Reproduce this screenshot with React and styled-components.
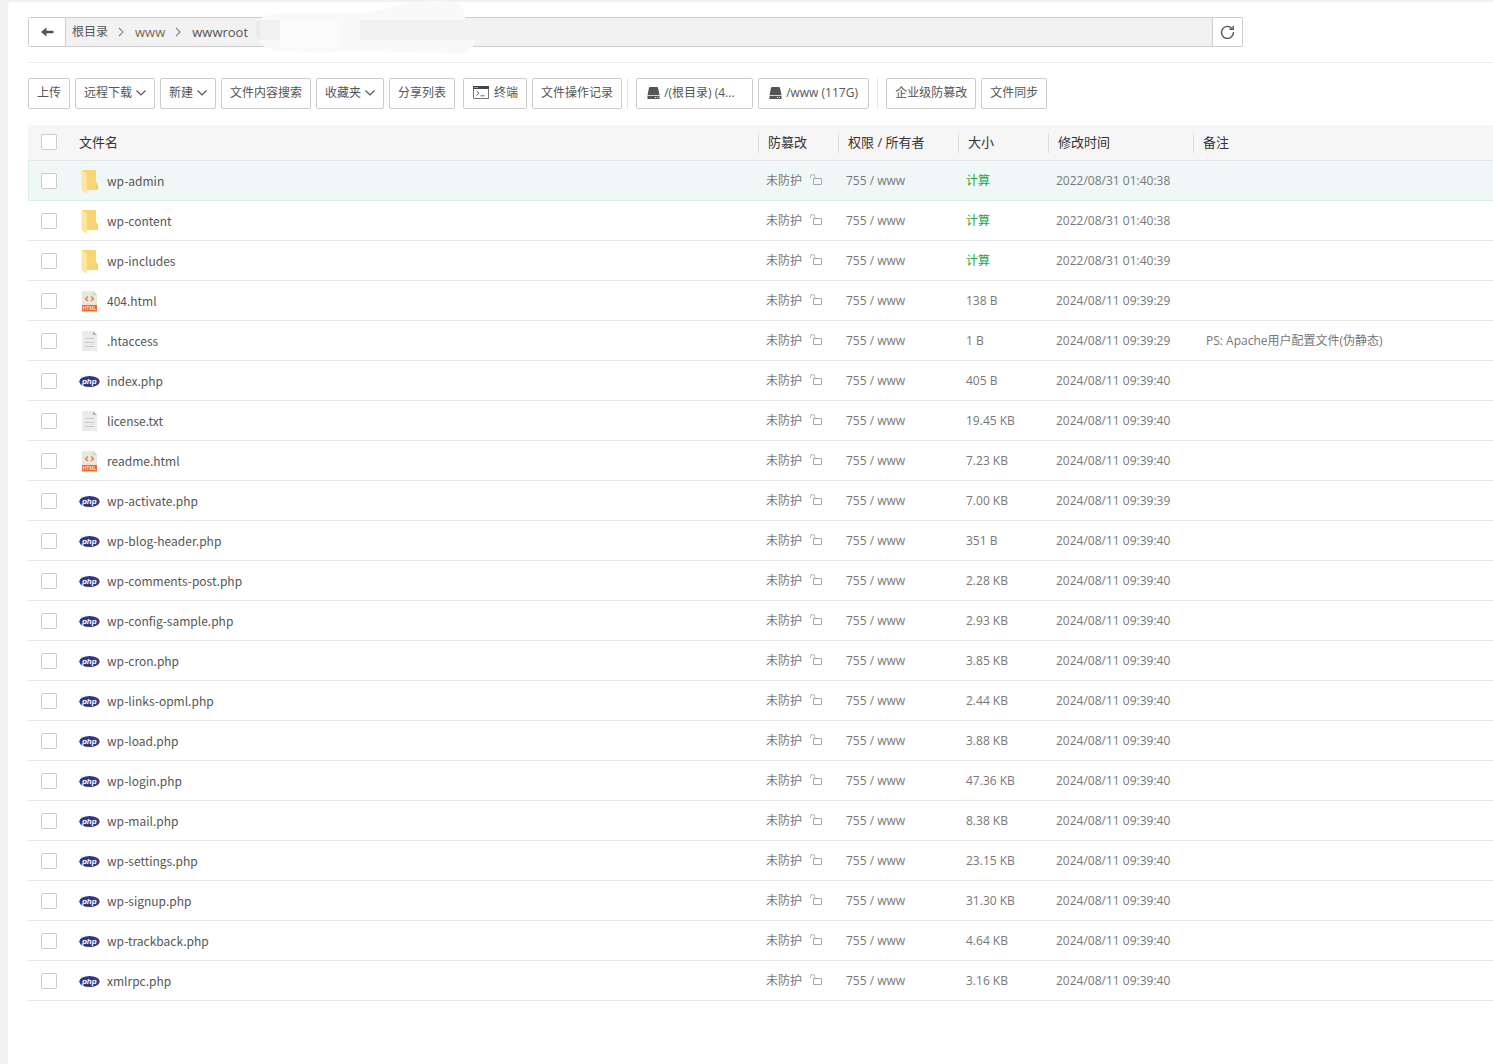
import React from "react";
import styled, { createGlobalStyle, css } from "styled-components";

const GlobalStyle = createGlobalStyle`
  * { box-sizing: border-box; }
  body {
    margin: 0;
    background: #f1f1f1;
    font-family: "Open Sans", "Noto Sans CJK SC", sans-serif;
    font-size: 12px;
    color: #555;
  }
  button, input { font: inherit; color: inherit; }
`;

const Panel = styled.main`
  margin: 2px 0 0 8px;
  padding: 15px 0 0 20px;
  min-height: calc(100vh - 2px);
  background: #fff;
  border-top-left-radius: 4px;
`;

const PathRow = styled.nav`
  position: relative;
  display: flex;
  height: 30px;
  width: 83%;
  max-width: 1215px;
  border: 1px solid #ccc;
  border-radius: 2px;
  background: #f2f2f2;
`;

const PathButton = styled.button`
  display: flex;
  align-items: center;
  justify-content: center;
  flex: none;
  width: ${(p) => (p.$end ? 30 : 37)}px;
  padding: 0;
  border: 0 solid #ccc;
  border-width: ${(p) => (p.$end ? "0 0 0 1px" : "0 1px 0 0")};
  background: #fff;
  cursor: pointer;
`;

const Crumbs = styled.ol`
  display: flex;
  align-items: center;
  flex: 1;
  gap: 11px;
  margin: 0;
  padding: 0 6px;
  list-style: none;
`;

const Crumb = styled.li`
  display: flex;
  align-items: center;
  gap: 10px;
`;

const CrumbLink = styled.a`
  color: ${(p) => p.$color || "#555"};
  font-size: ${(p) => (p.$latin ? 13 : 12)}px;
  line-height: 20px;
  text-decoration: none;
`;

const Smudge = styled.svg`
  position: absolute;
  left: 224px;
  top: -18px;
  pointer-events: none;
`;

const Toolbar = styled.div`
  display: flex;
  align-items: center;
  gap: 5px;
  margin-top: 15px;
  padding: 15px 0 16px;
  border-top: 1px solid #ebebeb;
`;

const ToolGroup = styled.div`
  display: flex;
  gap: 5px;
  margin-right: ${(p) => (p.$spaced ? 3 : 0)}px;
`;

const Separator = styled.span`
  width: 1px;
  height: 31px;
  margin-right: 3px;
  background: #e6e6e6;
`;

const ToolButton = styled.button`
  display: flex;
  align-items: center;
  gap: 4px;
  height: 31px;
  padding: 0 8px 2px;
  border: 1px solid #ccc;
  border-radius: 2px;
  background: #fff;
  line-height: 20px;
  white-space: nowrap;
  cursor: pointer;
  ${(p) => p.$kind === "terminal" && css`gap: 5px; padding-left: 9px;`}
  ${(p) => p.$kind === "disk" && css`padding-left: 10px;`}
`;

const DiskLabel = styled.span`
  width: ${(p) => p.$width}px;
  overflow: hidden;
  text-align: left;
  text-overflow: ellipsis;
`;

const Table = styled.table`
  width: 100%;
  border-collapse: separate;
  border-spacing: 0;
  table-layout: fixed;
`;

const HeadCell = styled.th`
  height: 36px;
  padding: 0;
  background: #f6f6f6;
  border-bottom: 1px solid #e6e6e6;
  color: #333;
  font-size: 13px;
  font-weight: 400;
  text-align: left;
`;

const HeadLabel = styled.div`
  height: 20px;
  padding-left: ${(p) => (p.$divided ? 9 : 8)}px;
  border-left: ${(p) => (p.$divided ? "1px solid #ddd" : "0")};
  line-height: 19px;
`;

const Row = styled.tr`
  --line: #e6e6e6;
  ${(p) => p.$active && css`
    --line: #d8f0ea;
    background: #eff8f7;
    td:first-child { border-left: 1px solid var(--line); padding-left: 12px; }
  `}
`;

const Cell = styled.td`
  height: 40px;
  padding: 0 8px;
  border-bottom: 1px solid var(--line);
  color: #777;
  line-height: 20px;
  white-space: nowrap;
`;

const NoteCell = styled(Cell)`
  padding-left: 13px;
`;

const CheckCell = styled(Cell)`
  padding: 0 0 0 13px;
`;

const HeadCheckCell = styled(HeadCell)`
  padding: 0 0 2px 13px;
`;

const Check = styled.input`
  display: block;
  appearance: none;
  width: 16px;
  height: 16px;
  margin: 0;
  border: 1px solid #ccc;
  border-radius: 2px;
  background: #fff;
`;

const FileName = styled.div`
  display: flex;
  align-items: center;
  gap: 7px;
  color: #555;
  font-family: "Noto Sans CJK SC", sans-serif;
  svg { margin-top: 2px; }
`;

const Protect = styled.div`
  display: flex;
  align-items: center;
  gap: 8px;
  svg { margin-bottom: 2px; }
`;

const SizeLink = styled.a`
  color: #20a53a;
  text-decoration: none;
`;

const Chevron = () => (
  <svg width="10" height="8" viewBox="0 0 10 8" fill="none" stroke="#555" strokeWidth="1.2">
    <path d="M.5 1.5 5 6l4.500-4.500" />
  </svg>
);

const CrumbArrow = () => (
  <svg width="6" height="10" viewBox="0 0 6 10" fill="none" stroke="#888" strokeWidth="1.1">
    <path d="M1 1l4 4-4 4" />
  </svg>
);

const BackIcon = () => (
  <svg width="13" height="10" viewBox="0 0 13 10" fill="#555">
    <path d="M0 5 5.500 0.500V3.800H12.500V6.200H5.500V9.500Z" />
  </svg>
);

const RefreshIcon = () => (
  <svg width="15" height="15" viewBox="0 0 15 15" fill="none" stroke="#555" strokeWidth="1.4">
    <path d="M12 3.400A6 6 0 1 0 13.500 7" />
    <path d="M13.200 .8v3.400H9.500" />
  </svg>
);

const TerminalIcon = () => (
  <svg width="16" height="13" viewBox="0 0 16 13" fill="none">
    <path d="M.5.5h15v12H.5z" stroke="#777" />
    <path d="M0 0h16v3H0z" fill="#444" />
    <path d="M1.500 1.500h1M3.500 1.500h1" stroke="#fff" />
    <path d="M3.500 5 6 7.200 3.500 9.500M7.500 9.800h4" stroke="#666" />
  </svg>
);

const DiskIcon = () => (
  <svg width="13" height="12" viewBox="0 0 13 12" fill="#555">
    <path d="M3 0h7q.8 0 1 .8L12.500 8H.5L2 .8Q2.200 0 3 0Z" />
    <path fillRule="evenodd" d="M.5 8.700h12V12H.5ZM8 10v1h1v-1Zm2 0v1h1v-1Z" />
  </svg>
);

const LockIcon = () => (
  <svg width="12" height="11" viewBox="0 0 12 11" fill="none" stroke="#aaa">
    <path d="M3.500 4.500h8v6h-8zM.5 4V2.500Q.5.5 2.700.5T4.800 2.500V4" />
  </svg>
);

const FolderIcon = () => (
  <svg width="21" height="24" viewBox="0 0 21 24">
    <path d="M3 0h14v12l2 4v4H4Z" fill="#f7d573" />
    <path d="M17 12l2 4v4l-2-1Z" fill="#f3cc62" />
    <path d="M2.500 0 8 3.500V24l-5.500-4Z" fill="#ffe59e" />
  </svg>
);

const HtmlIcon = () => (
  <svg width="21" height="21" viewBox="0 0 21 21">
    <path d="M3 0h11l4 4v10H3Z" fill="#e8e8dc" />
    <path d="M14 0l4 4h-4Z" fill="#d2d2c5" />
    <path d="M9 5.500 6.500 7.800 9 10M12 5.500l2.500 2.300L12 10" fill="none" stroke="#f0703c" strokeWidth="1.200" />
    <path d="M3 14h15v6.500H3Z" fill="#f26430" />
    <text x="10.500" y="19" textAnchor="middle" fontFamily="Liberation Sans, sans-serif" fontSize="5" fill="#fff">HTML</text>
  </svg>
);

const TextIcon = () => (
  <svg width="21" height="21" viewBox="0 0 21 21">
    <path d="M3 0h11l4 4v16H3Z" fill="#ebebeb" />
    <path d="M14 0l4 4h-4Z" fill="#b5b5b5" />
    <path d="M6 7.500h9M6 11.500h9M6 15.500h9" stroke="#c8c8c8" />
  </svg>
);

const PhpIcon = () => (
  <svg width="21" height="13" viewBox="0 0 21 13">
    <ellipse cx="10.500" cy="6.500" rx="10.200" ry="5.500" fill="#2f3a82" />
    <text x="10.300" y="8.800" textAnchor="middle" fontFamily="Liberation Sans, sans-serif" fontSize="8" fontWeight="700" fontStyle="italic" fill="#fff">php</text>
  </svg>
);

const ICONS = { folder: FolderIcon, html: HtmlIcon, text: TextIcon, php: PhpIcon };

const FILES = [
  ["folder", "wp-admin", null, "2022/08/31 01:40:38"],
  ["folder", "wp-content", null, "2022/08/31 01:40:38"],
  ["folder", "wp-includes", null, "2022/08/31 01:40:39"],
  ["html", "404.html", "138 B", "2024/08/11 09:39:29"],
  ["text", ".htaccess", "1 B", "2024/08/11 09:39:29", "PS: Apache用户配置文件(伪静态)"],
  ["php", "index.php", "405 B", "2024/08/11 09:39:40"],
  ["text", "license.txt", "19.45 KB", "2024/08/11 09:39:40"],
  ["html", "readme.html", "7.23 KB", "2024/08/11 09:39:40"],
  ["php", "wp-activate.php", "7.00 KB", "2024/08/11 09:39:39"],
  ["php", "wp-blog-header.php", "351 B", "2024/08/11 09:39:40"],
  ["php", "wp-comments-post.php", "2.28 KB", "2024/08/11 09:39:40"],
  ["php", "wp-config-sample.php", "2.93 KB", "2024/08/11 09:39:40"],
  ["php", "wp-cron.php", "3.85 KB", "2024/08/11 09:39:40"],
  ["php", "wp-links-opml.php", "2.44 KB", "2024/08/11 09:39:40"],
  ["php", "wp-load.php", "3.88 KB", "2024/08/11 09:39:40"],
  ["php", "wp-login.php", "47.36 KB", "2024/08/11 09:39:40"],
  ["php", "wp-mail.php", "8.38 KB", "2024/08/11 09:39:40"],
  ["php", "wp-settings.php", "23.15 KB", "2024/08/11 09:39:40"],
  ["php", "wp-signup.php", "31.30 KB", "2024/08/11 09:39:40"],
  ["php", "wp-trackback.php", "4.64 KB", "2024/08/11 09:39:40"],
  ["php", "xmlrpc.php", "3.16 KB", "2024/08/11 09:39:40"],
];

function FileRow({ file, active }) {
  const [kind, name, size, time, note] = file;
  const Icon = ICONS[kind];
  return (
    <Row $active={active}>
      <CheckCell><Check type="checkbox" aria-label={name} /></CheckCell>
      <Cell><FileName><Icon />{name}</FileName></Cell>
      <Cell><Protect>未防护<LockIcon /></Protect></Cell>
      <Cell>755 / www</Cell>
      <Cell>{size || <SizeLink href="#size">计算</SizeLink>}</Cell>
      <Cell>{time}</Cell>
      <NoteCell>{note}</NoteCell>
    </Row>
  );
}

export default function App() {
  return (
    <>
      <GlobalStyle />
      <Panel>
        <PathRow>
          <PathButton aria-label="Back"><BackIcon /></PathButton>
          <Crumbs>
            <Crumb><CrumbLink href="#root">根目录</CrumbLink><CrumbArrow /></Crumb>
            <Crumb><CrumbLink href="#www" $latin $color="#7d6a4a">www</CrumbLink><CrumbArrow /></Crumb>
            <Crumb><CrumbLink href="#wwwroot" $latin>wwwroot</CrumbLink></Crumb>
          </Crumbs>
          <PathButton $end aria-label="Refresh"><RefreshIcon /></PathButton>
          <Smudge width="224" height="56" viewBox="0 0 224 56">
            <path d="M4 22C8 17 14 14 24 14H108C125 13 138 4 160 2Q200-1 206 4Q213 10 212 20V40H222Q222 47 215 51Q205 57 196 53L150 52L95 50Q75 54 55 52L20 50Q10 48 6 40Q0 31 4 22Z" fill="#f9f9f9" />
            <path d="M4 22 7 20V40H6Q0 31 4 22Z" fill="#eaeaea" />
            <path d="M7 20h20v20H7z" fill="#f2f2f2" />
            <path d="M27 20h60v28H27z" fill="#fbfbfb" />
            <path d="M107 20h115v20H107z" fill="#f2f2f2" />
          </Smudge>
        </PathRow>

        <Toolbar>
          <ToolGroup $spaced>
            <ToolButton>上传</ToolButton>
            <ToolButton>远程下载<Chevron /></ToolButton>
            <ToolButton>新建<Chevron /></ToolButton>
            <ToolButton>文件内容搜索</ToolButton>
            <ToolButton>收藏夹<Chevron /></ToolButton>
            <ToolButton>分享列表</ToolButton>
          </ToolGroup>
          <ToolGroup>
            <ToolButton $kind="terminal"><TerminalIcon />终端</ToolButton>
            <ToolButton>文件操作记录</ToolButton>
          </ToolGroup>
          <Separator />
          <ToolGroup $spaced>
            <ToolButton $kind="disk"><DiskIcon /><DiskLabel $width={80}>/(根目录) (4...</DiskLabel></ToolButton>
            <ToolButton $kind="disk"><DiskIcon /><DiskLabel $width={74}>/www (117G)</DiskLabel></ToolButton>
          </ToolGroup>
          <Separator />
          <ToolGroup>
            <ToolButton>企业级防篡改</ToolButton>
            <ToolButton>文件同步</ToolButton>
          </ToolGroup>
        </Toolbar>

        <Table>
          <colgroup>
            <col width="43" />
            <col width="687" />
            <col width="80" />
            <col width="120" />
            <col width="90" />
            <col width="145" />
            <col />
          </colgroup>
          <thead>
            <tr>
              <HeadCheckCell><Check type="checkbox" aria-label="Select all" /></HeadCheckCell>
              <HeadCell><HeadLabel>文件名</HeadLabel></HeadCell>
              <HeadCell><HeadLabel $divided>防篡改</HeadLabel></HeadCell>
              <HeadCell><HeadLabel $divided>权限 / 所有者</HeadLabel></HeadCell>
              <HeadCell><HeadLabel $divided>大小</HeadLabel></HeadCell>
              <HeadCell><HeadLabel $divided>修改时间</HeadLabel></HeadCell>
              <HeadCell><HeadLabel $divided>备注</HeadLabel></HeadCell>
            </tr>
          </thead>
          <tbody>
            {FILES.map((file, i) => <FileRow key={file[1]} file={file} active={i === 0} />)}
          </tbody>
        </Table>
      </Panel>
    </>
  );
}
